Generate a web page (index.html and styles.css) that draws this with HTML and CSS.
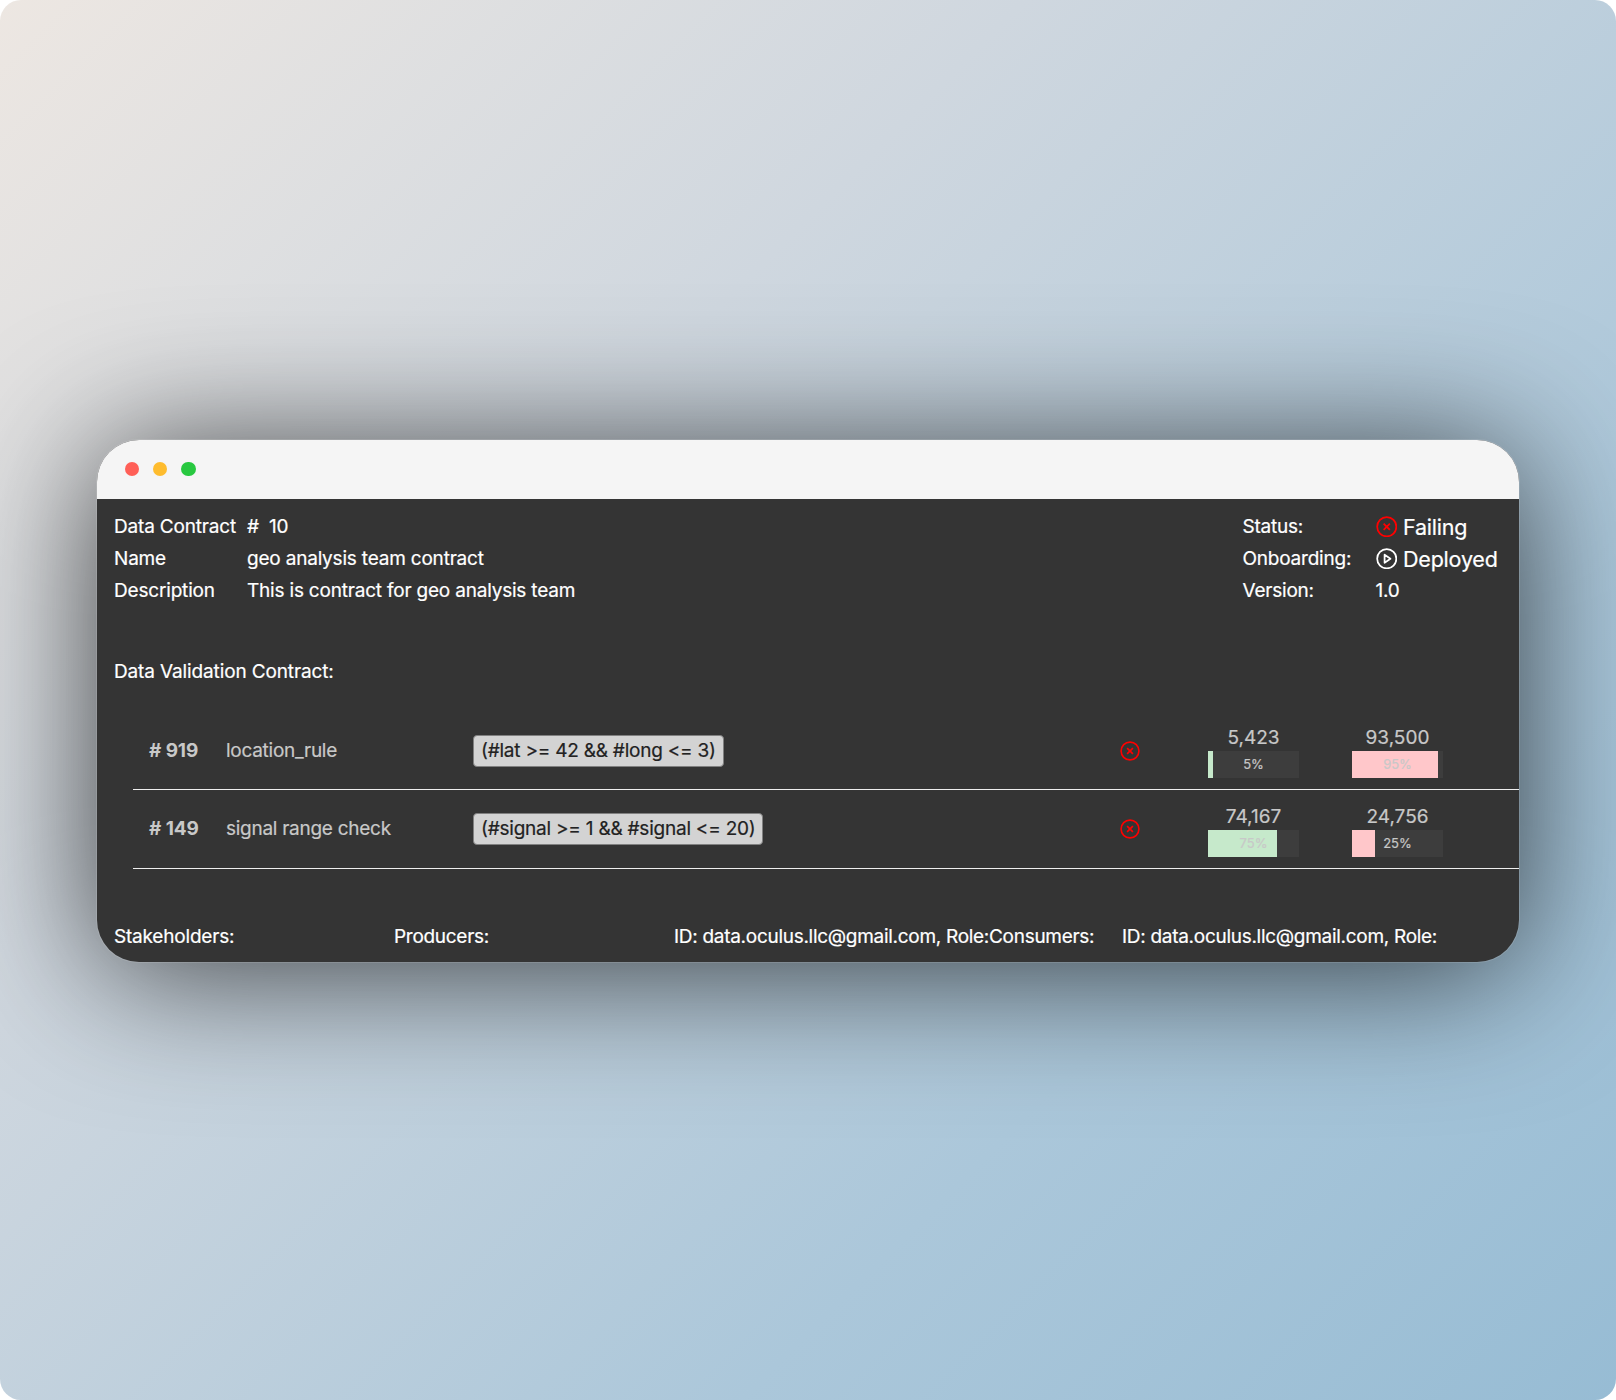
FILE: index.html
```html
<!DOCTYPE html>
<html lang="en">
<head>
<meta charset="utf-8">
<title>Data Contract</title>
<link rel="stylesheet" href="styles.css">
</head>
<body>
<svg width="0" height="0" class="defs" aria-hidden="true">
  <symbol id="fail" viewBox="0 0 22 22"><circle cx="11" cy="11" r="9.8"/><path d="M7.8 7.8 14.2 14.2M14.2 7.8 7.8 14.2"/></symbol>
  <symbol id="play" viewBox="0 0 22 22"><circle cx="11" cy="11" r="9.8"/><path d="M8.8 6.9 14.8 11 8.8 15.1Z"/></symbol>
</svg>
<main class="backdrop">
  <section class="window">
    <header class="titlebar"><i class="dot red"></i><i class="dot yellow"></i><i class="dot green"></i></header>
    <div class="content">
      <div class="summary">
        <dl class="facts">
          <dt>Data Contract</dt><dd><span class="hash">#</span><span>10</span></dd>
          <dt>Name</dt><dd>geo analysis team contract</dd>
          <dt>Description</dt><dd>This is contract for geo analysis team</dd>
        </dl>
        <dl class="facts state">
          <dt>Status:</dt><dd class="big"><svg class="icon fail"><use href="#fail"/></svg><span>Failing</span></dd>
          <dt>Onboarding:</dt><dd class="big"><svg class="icon"><use href="#play"/></svg><span>Deployed</span></dd>
          <dt>Version:</dt><dd>1.0</dd>
        </dl>
      </div>
      <h2 class="heading">Data Validation Contract:</h2>
      <div class="rules">
        <div class="rule">
          <b class="id"># 919</b><span>location_rule</span><span><code class="expr">(#lat &gt;= 42 &amp;&amp; #long &lt;= 3)</code></span>
          <svg class="icon fail small"><use href="#fail"/></svg>
          <div class="metric"><span>5,423</span><div class="bar"><i class="fill pass" style="width:5.5%"></i><em>5%</em></div></div>
          <div class="metric"><span>93,500</span><div class="bar"><i class="fill miss" style="width:94.5%"></i><em>95%</em></div></div>
        </div>
        <div class="rule">
          <b class="id"># 149</b><span>signal range check</span><span><code class="expr">(#signal &gt;= 1 &amp;&amp; #signal &lt;= 20)</code></span>
          <svg class="icon fail small"><use href="#fail"/></svg>
          <div class="metric"><span>74,167</span><div class="bar"><i class="fill pass" style="width:75.5%"></i><em>75%</em></div></div>
          <div class="metric"><span>24,756</span><div class="bar"><i class="fill miss" style="width:25%"></i><em>25%</em></div></div>
        </div>
      </div>
      <footer class="people">
        <span>Stakeholders:</span><span>Producers:</span><span>ID: data.oculus.llc@gmail.com, Role:Consumers:</span><span>ID: data.oculus.llc@gmail.com, Role:</span>
      </footer>
    </div>
  </section>
</main>
</body>
</html>
```
FILE: styles.css
```css
* { box-sizing: border-box; }
body { margin: 0; background: #fff; font-family: Inter, "Liberation Sans", sans-serif; }
.defs { display: block; height: 0; }
.backdrop {
  width: 1616px; height: 1400px; border-radius: 21px; overflow: hidden;
  display: flex; justify-content: center; align-items: flex-start; padding-top: 439.5px;
  background: linear-gradient(135deg, #ede7e2 0%, #cfd7df 34%, #abc7da 71%, #97bcd4 100%);
}
.window {
  width: 1422px; height: 522px; border-radius: 42px; overflow: hidden;
  background: #343434; color: #fff; font-size: 19px; line-height: 32px; letter-spacing: -.2px;
  -webkit-text-stroke: .2px currentColor;
  box-shadow: 0 0 0 1px rgba(255,255,255,.12), 0 10px 138px rgba(0,0,0,.71);
}
.titlebar { height: 59.5px; background: #f5f5f5; display: flex; align-items: center; gap: 14px; padding-left: 28px; }
.dot { width: 14.2px; height: 14.2px; border-radius: 50%; }
.red { background: #ff5f57; }
.yellow { background: #febc2e; }
.green { background: #28c840; }
.content { padding: 12px 0 0 17px; }
.summary { display: flex; justify-content: space-between; }
.facts { margin: 0; display: grid; grid-template-columns: 133px auto; grid-auto-rows: 32px; white-space: nowrap; }
.facts dt { letter-spacing: -.18px; }
.facts dd { margin: 0; display: flex; align-items: center; }
.hash { width: 22px; }
.facts.state { width: 276.5px; }
.state dt { letter-spacing: -.22px; }
.facts .big { font-size: 21.5px; gap: 6px; letter-spacing: -.2px; padding-bottom: 1px; }
.icon { width: 21.5px; height: 21.5px; fill: none; stroke: currentColor; stroke-width: 1.8; stroke-linejoin: round; }
.fail { color: #f00; }
.small { width: 20px; height: 20px; }
.heading { margin: 49px 0 24px; font: inherit; letter-spacing: -.13px; }
.rules { margin-left: 19px; color: #c8c8c8; }
.rule {
  height: 78.4px; border-bottom: 1.5px solid #eee; padding-left: 16px;
  display: grid; grid-template-columns: 77px 247px 647px 88px 144px 92px; align-items: center; letter-spacing: -.27px;
}
.id { font-weight: 700; letter-spacing: -.1px; -webkit-text-stroke: 0; }
.expr {
  display: inline-block; font-family: inherit; font-size: 19px; height: 32px; line-height: 30px; padding: 0 7px; letter-spacing: -.23px;
  background: #d3d3d3; color: #222; border: 1px solid #808080; border-radius: 4px;
}
.metric { width: 91px; text-align: center; line-height: 26px; letter-spacing: 0; padding-top: 2px; }
.metric span { display: block; }
.bar { height: 27px; background: #3d3d3d; display: grid; }
.fill, .bar em { grid-area: 1 / 1; }
.pass { background: #c6e9cb; }
.miss { background: #ffc7ca; }
.bar em { font: 13px/26px Inter, sans-serif; }
.people { margin-top: 52px; display: grid; grid-template-columns: 280px 280px 448px auto; white-space: nowrap; letter-spacing: -.29px; }
.people span:first-child { letter-spacing: -.2px; }
```
